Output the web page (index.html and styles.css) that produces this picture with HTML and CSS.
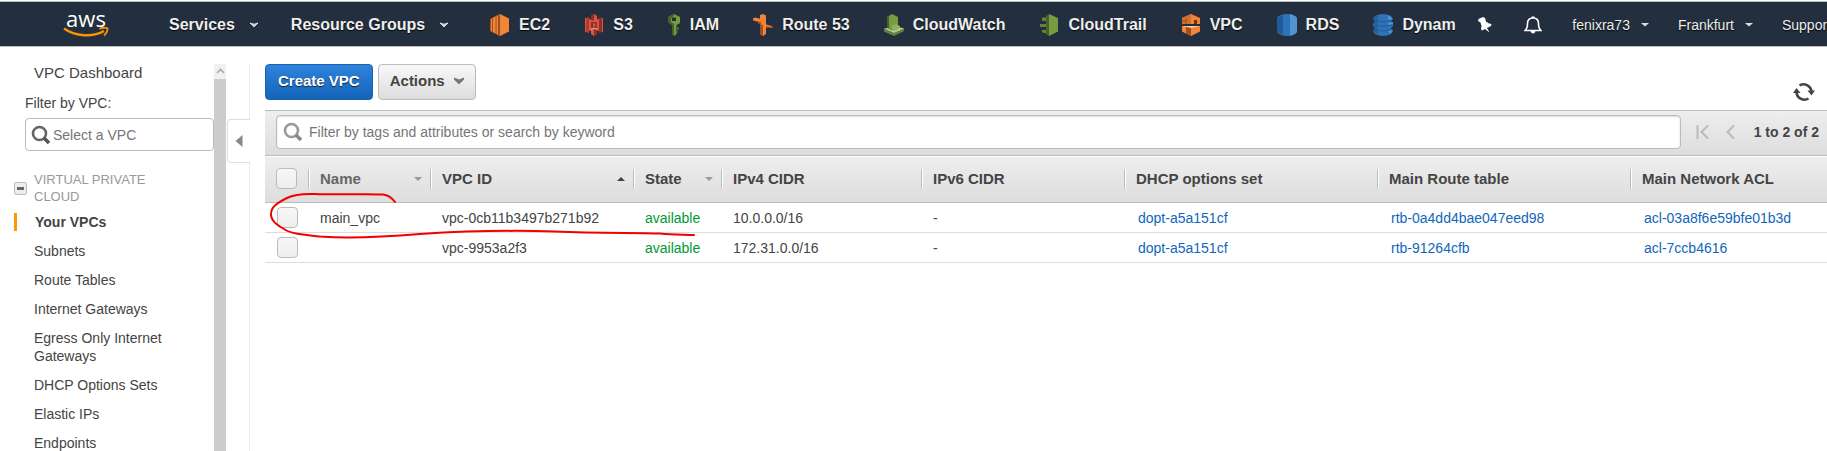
FILE: index.html
```html
<!DOCTYPE html>
<html lang="en">
<head>
<meta charset="utf-8">
<title>VPC Management Console</title>
<link rel="stylesheet" href="styles.css">
</head>
<body>
<header class="topnav">
  <a class="logo" href="#" aria-label="aws">
    <span class="logo-text">aws</span>
    <svg class="logo-smile" viewBox="0 0 46 11" width="46" height="11"><path d="M1 1.500C12 9.500 30 10.500 41 4" fill="none" stroke="#f79400" stroke-width="2.400"/><path d="M36.500 1.800C39.500 .500 43.500 .300 44.300 1.300S43.500 6.500 41 8.500" fill="none" stroke="#f79400" stroke-width="1.900"/></svg>
  </a>
  <button class="menu menu-main services" type="button">Services <svg width="10" height="6" viewBox="0 0 10 6"><path d="M1 1Q5 3.500 9 1L5 4.800Z" fill="#ddd" stroke="#ddd"/></svg></button>
  <button class="menu menu-main groups" type="button">Resource Groups <svg width="10" height="6" viewBox="0 0 10 6"><path d="M1 1Q5 3.500 9 1L5 4.800Z" fill="#ddd" stroke="#ddd"/></svg></button>
  <nav class="shortcuts">
    <a href="#"><svg viewBox="0 0 22 22"><path d="M1 5 5 3V19L1 17Z" fill="#9d5025"/><path d="M2.500 4.500V17.500M4.500 3.500V18.500" stroke="#f58536" /><path d="M5 3 11 0V22L5 19Z" fill="#f58536"/><path d="M7 2V20" stroke="#9d5025"/><path d="M11 0 20 4.500V17.500L11 22Z" fill="#f58536"/><path d="M9 1 11 0V22L9 21Z" fill="#9d5025"/></svg>EC2</a>
    <a href="#"><svg viewBox="0 0 22 22"><path d="M2 4 6 3V19L2 18Z" fill="#b23b2d"/><path d="M20 4 16 3V19L20 18Z" fill="#8c3123"/><path d="M6 5 11 6V16L6 17Z M16 5 11 6V16L16 17Z" fill="#e05243"/><path d="M8 2 11 0 14 2V6L11 7 8 6Z M8 16 11 15 14 16V20L11 22 8 20Z" fill="#e05243"/><path d="M2.500 4V18M19.500 4V18" stroke="#e05243"/><path d="M11 0V7L8 6V2Z M11 15V22L14 20V16Z M8 8H14V14H8Z" fill="#8c3123"/><path d="M10 9.500H12.500V12.500H10Z" fill="#e05243"/><path d="M8 15.500 11 14 14 15.500" stroke="#f2b0a9" fill="none"/></svg>S3</a>
    <a href="#"><svg class="narrow" viewBox="4 0 14 22"><path d="M5 3 11 0 17 3V9L13.500 11V20L11.500 22 9 20V11L5 8Z M9 3.500V7H13V3.500Z" fill="#759c3e" fill-rule="evenodd"/><path d="M5 3 11 0V2L8 4V8L11 10V21L9 20V11L5 8Z" fill="#4b612c"/><path d="M13 13H16V16H13Z M13 17H15V19H13Z" fill="#4b612c"/></svg>IAM</a>
    <a href="#"><svg viewBox="0 0 22 22"><path d="M8 1 11 0 14 1.500V20L11 22 8 20Z" fill="#f58536"/><path d="M8 10 11 11V22L8 20Z" fill="#9d5025"/><path d="M1 4.500 3 3.500 9 5V9L6 8V7.500L1 6.500Z" fill="#f58536"/><path d="M1 6.500 9 8V10L6 9.500V8.500Z" fill="#9d5025"/><path d="M14 10.500 21 12V14L14 14Z" fill="#9d5025"/><path d="M14 10.500 19 12V13L14 12Z" fill="#f58536"/></svg>Route 53</a>
    <a href="#"><svg viewBox="0 0 22 22"><path d="M4 3 9 0 15 3V17H4Z" fill="#759c3e"/><path d="M4 3 9 0V16L4 15Z" fill="#4b612c"/><path d="M6 2 9 .500V15H6Z" fill="#759c3e"/><path d="M9 11 13 10 17 12V17H9Z" fill="#8cb257"/><path d="M1 14.500 11 19 21 14.500V17L11 22 1 17.500Z" fill="#648339"/><path d="M1 14.500 4 14 11 17 18 13.500 21 14.500 11 19Z" fill="#b7ca9d"/></svg>CloudWatch</a>
    <a href="#"><svg viewBox="0 0 22 22"><path d="M8 2 11 0V22L8 20Z" fill="#4b612c"/><path d="M11 0 20 4V17.500L11 22Z" fill="#759c3e"/><path d="M4 4 7 3 8 4V7H4Z M2 10H8V13H2Z M4 16H8V19L6 19 4 18Z" fill="#648339"/></svg>CloudTrail</a>
    <a href="#"><svg viewBox="0 0 22 22"><path d="M2 4 11 0 20 4V10H2Z" fill="#f58536"/><path d="M2 4 11 0V10H2Z" fill="#d3702c"/><path d="M6 3.500V10M2 7H7" stroke="#9d5025"/><path d="M14 6 17 6V10H14Z" fill="#693519"/><path d="M2 12H20V17.500L11 22 2 17.500Z" fill="#f58536"/><path d="M6 12H11V22L6 19.500Z" fill="#9d5025"/><path d="M2 12 11 14 20 12Z" fill="#fbcda9"/></svg>VPC</a>
    <a href="#"><svg viewBox="0 0 22 22"><path d="M1 4Q4 0 11 0T21 4V18Q18 22 11 22T1 18Z" fill="#2e73b8"/><path d="M1 4 7 1V21L1 18Z" fill="#1f5b98"/><path d="M14 0 19 2 21 4V18L19 20 14 22Z" fill="#5294cf"/></svg>RDS</a>
    <a href="#"><svg viewBox="0 0 22 22"><path d="M3 2Q11-2 19 2L21 5 19 7 21 10V12L19 14 21 17 19 20Q11 24 3 20L1 17 3 14 1 12V10L3 7 1 5Z" fill="#2e73b8"/><path d="M2 6.500Q11 9 20 6.500M2 11Q11 13.500 20 11M2 15.500Q11 18 20 15.500" stroke="#205b99" fill="none"/><path d="M16 1 21 5 16 6Z M16 9 21 8V10L16 11Z M16 17 21 16 18 20Z" fill="#5294cf"/><path d="M2 3 6 1V20L2 18Z" fill="#205b99" opacity=".7"/></svg>Dynam</a>
  </nav>
  <button class="icon-btn pin" type="button" aria-label="Edit shortcuts"><svg width="16" height="18" viewBox="0 0 16 18"><path d="M6 1 8 2 9 5.500 12 7.500 14.500 8 14 10 10 12 12.500 16.500 8 13 5 14.500 4 13 4.500 10 3.500 6.500 1 5 1.500 3Z" fill="#fff"/></svg></button>
  <button class="icon-btn bell" type="button" aria-label="Notifications"><svg width="18" height="20" viewBox="0 0 18 20"><path d="M1 15.500C3.500 13.500 3.500 11 3.500 8.500C3.500 5 5.500 3 9 3S14.500 5 14.500 8.500C14.500 11 14.500 13.500 17 15.500Z" fill="none" stroke="#fff" stroke-width="1.600"/><path d="M7.500 3V1.500H10.500V3Z M6.500 16H11.500Q11 18.500 9 18.500T6.500 16Z" fill="#fff"/></svg></button>
  <button class="menu user" type="button">fenixra73 <svg width="10" height="6" viewBox="0 0 10 6"><path d="M1 1H9L5 4.500Z" fill="#ddd"/></svg></button>
  <button class="menu region" type="button">Frankfurt <svg width="10" height="6" viewBox="0 0 10 6"><path d="M1 1H9L5 4.500Z" fill="#ddd"/></svg></button>
  <button class="menu support" type="button">Support</button>
</header>
<div class="page">
  <aside class="sidebar">
    <div class="side-content">
      <a class="dash" href="#">VPC Dashboard</a>
      <label class="filter-label" for="vpcsel">Filter by VPC:</label>
      <div class="side-search">
        <svg width="20" height="20" viewBox="0 0 20 20"><circle cx="8.500" cy="8.500" r="6.500" fill="none" stroke="#666" stroke-width="2.600"/><path d="M13 13 18 18" stroke="#555" stroke-width="3.600"/></svg>
        <input id="vpcsel" type="text" placeholder="Select a VPC">
      </div>
      <div class="group">
        <button class="collapse" type="button" aria-label="Collapse section"><svg width="7" height="3" viewBox="0 0 7 3"><path d="M0 0H7V3H0Z" fill="#666"/></svg></button>
        <h2 class="group-title">VIRTUAL PRIVATE CLOUD</h2>
      </div>
      <ul class="links">
        <li class="current"><a href="#">Your VPCs</a></li>
        <li><a href="#">Subnets</a></li>
        <li><a href="#">Route Tables</a></li>
        <li><a href="#">Internet Gateways</a></li>
        <li><a href="#">Egress Only Internet Gateways</a></li>
        <li><a href="#">DHCP Options Sets</a></li>
        <li><a href="#">Elastic IPs</a></li>
        <li><a href="#">Endpoints</a></li>
      </ul>
    </div>
    <div class="scrollbar"><svg width="12" height="15" viewBox="0 0 12 15"><path d="M3 9 6.500 5.500 10 9" fill="none" stroke="#aaa" stroke-width="1.600"/></svg></div>
  </aside>
  <div class="divider">
    <div class="divider-top"></div>
    <button class="toggle" type="button" aria-label="Hide sidebar"><svg width="8" height="12" viewBox="0 0 8 12"><path d="M7.500 0V12L.500 6Z" fill="#888"/></svg></button>
    <div class="divider-rest"></div>
  </div>
  <main class="main">
    <div class="actions">
      <button class="btn primary" type="button">Create VPC</button>
      <button class="btn" type="button">Actions <svg width="10" height="8" viewBox="0 0 10 8"><path d="M0 .500 5 2.500 10 .500V2.500L5 7.500 0 2.500Z" fill="#777"/></svg></button>
      <button class="refresh" type="button" aria-label="Refresh"><svg width="22" height="20" viewBox="0 0 22 20"><path d="M6.500 3.500A8 8 0 0 1 18.500 9M15.500 16.500A8 8 0 0 1 3.500 11" fill="none" stroke="#444" stroke-width="2.600"/><path d="M14.500 8.500H22L18.500 13.500Z M7.500 11H0L3.500 6Z" fill="#444"/></svg></button>
    </div>
    <div class="toolbar">
      <div class="search">
        <svg width="20" height="20" viewBox="0 0 20 20"><circle cx="8.500" cy="8.500" r="6.500" fill="none" stroke="#999" stroke-width="2.600"/><path d="M13 13 18 18" stroke="#888" stroke-width="3.600"/></svg>
        <input type="text" aria-label="Filter" placeholder="Filter by tags and attributes or search by keyword">
      </div>
      <button class="pager first" type="button" aria-label="First page"><svg width="13" height="16" viewBox="0 0 13 16"><path d="M1.500 1V15M12 1.500 5.500 8 12 14.500" fill="none" stroke="#bbb" stroke-width="2"/></svg></button>
      <button class="pager prev" type="button" aria-label="Previous page"><svg width="9" height="16" viewBox="0 0 9 16"><path d="M8 1.500 1.500 8 8 14.500" fill="none" stroke="#bbb" stroke-width="2"/></svg></button>
      <span class="count">1 to 2 of 2</span>
    </div>
    <table class="grid">
      <colgroup><col class="c-check"><col class="c-name"><col class="c-id"><col class="c-state"><col class="c-v4"><col class="c-v6"><col class="c-dhcp"><col class="c-route"><col></colgroup>
      <thead><tr>
        <th><input type="checkbox" aria-label="Select all"></th>
        <th><div class="head muted">Name<svg width="10" height="6" viewBox="0 0 10 6"><path d="M1 1H9L5 5Z" fill="#999"/></svg></div></th>
        <th><div class="head">VPC ID<svg width="10" height="6" viewBox="0 0 10 6"><path d="M1 5H9L5 1Z" fill="#444"/></svg></div></th>
        <th><div class="head">State<svg width="10" height="6" viewBox="0 0 10 6"><path d="M1 1H9L5 5Z" fill="#999"/></svg></div></th>
        <th><div class="head">IPv4 CIDR</div></th>
        <th><div class="head">IPv6 CIDR</div></th>
        <th><div class="head">DHCP options set</div></th>
        <th><div class="head">Main Route table</div></th>
        <th><div class="head">Main Network ACL</div></th>
      </tr></thead>
      <tbody>
        <tr><td><input type="checkbox" aria-label="Select main_vpc"></td><td>main_vpc</td><td>vpc-0cb11b3497b271b92</td><td class="ok">available</td><td>10.0.0.0/16</td><td>-</td><td class="link"><a href="#">dopt-a5a151cf</a></td><td class="link"><a href="#">rtb-0a4dd4bae047eed98</a></td><td class="link"><a href="#">acl-03a8f6e59bfe01b3d</a></td></tr>
        <tr><td><input type="checkbox" aria-label="Select vpc-9953a2f3"></td><td></td><td>vpc-9953a2f3</td><td class="ok">available</td><td>172.31.0.0/16</td><td>-</td><td class="link"><a href="#">dopt-a5a151cf</a></td><td class="link"><a href="#">rtb-91264cfb</a></td><td class="link"><a href="#">acl-7ccb4616</a></td></tr>
      </tbody>
    </table>
    <svg class="mark" width="430" height="50" viewBox="0 0 430 50"><path d="M130 11C127 7 123 4 118 3.500C100 2.500 70 4 50 3C38 2.500 28 4 22 7C12 12 6 16 6 23C6 30 12 34 19 38C26 43 40 44 55 45.500C90 48 125 45.500 155 43C195 40.500 245 39 290 40.500C335 42.500 370 41.500 395 42.500C408 44 418 43.500 429 44" fill="none" stroke="#f00000" stroke-width="2" stroke-linecap="round"/></svg>
  </main>
</div>
</body>
</html>
```
FILE: styles.css
```css
* { box-sizing: border-box; }
body {
  margin: 0;
  height: 100vh;
  display: flex;
  flex-direction: column;
  overflow: hidden;
  background: #fff;
  color: #444;
  font: 14px/18px "Liberation Sans", Arial, sans-serif;
}
button, input { font: inherit; color: inherit; margin: 0; padding: 0; }
button { border: 0; background: none; white-space: nowrap; }
a { color: inherit; text-decoration: none; }
svg { display: block; flex: none; }

.topnav {
  display: flex;
  align-items: center;
  flex: none;
  height: 46px;
  margin-top: 1px;
  padding-top: 1px;
  border-top: 1px solid #b5c3c9;
  border-bottom: 1px solid #bbb;
  background: #232f3e;
  color: #fff;
  overflow: hidden;
  text-shadow: 0 1px 1px #000;
}
.logo { display: flex; flex-direction: column; align-items: center; flex: none; width: 46px; margin-left: 63px; padding-bottom: 3px; }
.logo-text { font: 22px/18px "Open Sans", sans-serif; font-weight: 500; text-shadow: none; }
.menu { display: flex; align-items: center; flex: none; gap: 10px; color: #eee; text-shadow: inherit; }
.menu-main { gap: 14px; font-size: 16px; font-weight: bold; }
.services { margin-left: 60px; }
.groups { margin-left: 32px; }
.shortcuts { display: flex; gap: 33px; flex: 1 1 0; min-width: 0; margin-left: 40px; overflow: hidden; font-size: 16px; line-height: 24px; font-weight: bold; color: #eee; }
.shortcuts a { display: flex; align-items: center; gap: 8px; flex: none; }
.shortcuts svg { width: 22px; height: 22px; }
.shortcuts .narrow { width: 16px; }
.pin { margin-left: 18px; }
.bell { margin-left: 31px; }
.user { margin-left: 30px; }
.region { margin-left: 28px; }
.support { margin-left: 28px; margin-right: -4px; }

.page { display: flex; flex: 1; min-height: 0; padding-top: 17px; }
.sidebar { display: flex; flex: none; width: 226px; }
.side-content { flex: 1; overflow: hidden; padding-left: 25px; }
.scrollbar { flex: none; width: 12px; background: #cdcdcd; }
.scrollbar svg { background: #f0f0f0; }
.dash { display: block; padding-left: 9px; font-size: 15px; }
.filter-label { display: block; margin-top: 12px; }
.side-search { display: flex; align-items: center; height: 33px; margin-top: 6px; padding-left: 5px; border: 1px solid #bbb; border-radius: 4px; }
.side-search input { width: 100%; margin-left: 2px; border: 0; outline: 0; background: none; }
input::placeholder { color: #757575; opacity: 1; }
.group { display: flex; align-items: center; gap: 7px; margin: 20px 0 0 -11px; }
.collapse { display: flex; align-items: center; justify-content: center; flex: none; width: 13px; height: 13px; border: 1px solid #bbb; border-radius: 2px; background: #eee; }
.group-title { margin: 0; width: 130px; font-size: 13px; line-height: 17px; font-weight: normal; color: #999; }
.links { display: flex; flex-direction: column; gap: 11px; margin: 8px 0 0 -11px; padding: 0; list-style: none; }
.links li { width: 170px; padding-left: 20px; }
.links .current { padding-left: 18px; border-left: 3px solid #f90; font-weight: bold; }

.divider { display: flex; flex-direction: column; flex: none; width: 24px; }
.divider-top { height: 55px; border-right: 1px solid #eee; }
.toggle { display: flex; align-items: center; justify-content: center; height: 44px; margin-left: 1px; border: 1px solid #ddd; border-right: 0; border-radius: 4px 0 0 4px; }
.divider-rest { flex: 1; border-right: 1px solid #eee; }

.main { position: relative; flex: 1; min-width: 0; padding-left: 15px; }
.actions { display: flex; gap: 5px; height: 46px; }
.btn { display: flex; align-items: center; gap: 9px; height: 36px; padding: 0 11px 2px; border: 1px solid #bbb; border-radius: 4px; background: linear-gradient(#f8f8f8, #ddd); font-size: 15px; font-weight: bold; }
.btn.primary { padding: 0 12px 2px; border-color: #1a62b0; background: linear-gradient(#2f83dc, #1464b8); color: #fff; text-shadow: 0 1px 1px #124; }
.refresh { align-self: flex-start; margin: 18px 12px 0 auto; }
.toolbar { display: flex; align-items: center; height: 46px; padding: 0 8px 2px 11px; border-top: 1px solid #bbb; border-bottom: 1px solid #bbb; background: linear-gradient(#eee, #ddd); }
.search { display: flex; align-items: center; flex: 1; height: 34px; padding-left: 6px; border: 1px solid #bbb; border-radius: 4px; background: #fff; box-shadow: inset 0 1px 2px #ddd; }
.search input { flex: 1; margin-left: 6px; border: 0; outline: 0; background: none; }
.first { margin-left: 15px; }
.prev { margin-left: 17px; }
.count { margin-left: 19px; font-weight: bold; }

.grid { width: 100%; table-layout: fixed; border-collapse: separate; border-spacing: 0; }
.c-check { width: 43px; }
.c-name { width: 122px; }
.c-id { width: 203px; }
.c-state { width: 88px; }
.c-v4 { width: 200px; }
.c-v6 { width: 203px; }
.c-dhcp { width: 253px; }
.c-route { width: 253px; }
.grid th { height: 47px; padding: 0 0 2px; border-top: 1px solid #fff; border-bottom: 1px solid #bbb; background: linear-gradient(#eee, #ddd); font-size: 15px; text-align: left; vertical-align: middle; white-space: nowrap; }
.head { display: flex; align-items: center; justify-content: space-between; height: 20px; padding: 0 7px 0 11px; border-left: 1px solid #bbb; box-shadow: inset 1px 0 #fff; }
.head.muted { color: #666; }
.grid td { height: 30px; padding: 0 0 0 12px; border-bottom: 1px solid #ddd; white-space: nowrap; }
.grid th:first-child { padding-left: 11px; }
.grid input { display: block; appearance: none; width: 21px; height: 21px; border: 1px solid #bbb; border-radius: 4px; background: linear-gradient(#f7f7f7, #eee); }
.grid .ok { color: #093; }
.grid .link { padding-left: 14px; color: #1166bb; }
.mark { position: absolute; left: 15px; top: 127px; pointer-events: none; }
```
